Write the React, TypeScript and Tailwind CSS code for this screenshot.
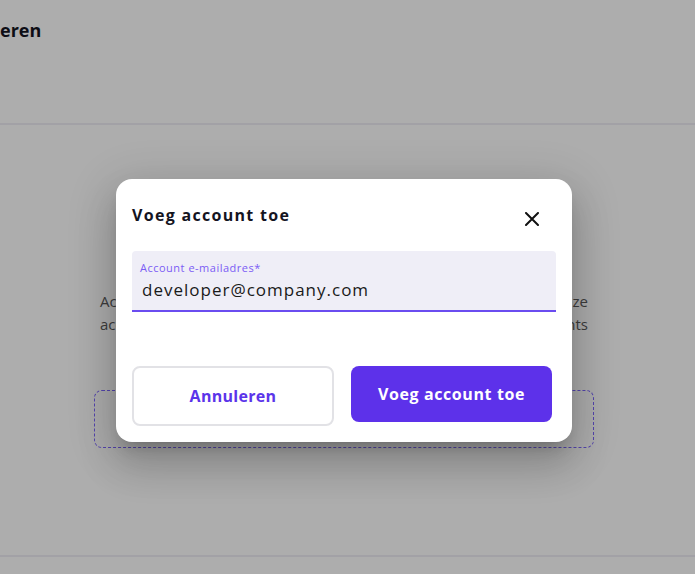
import React from 'react';

export default function App() {
  return (
    <div className="relative h-[574px] w-[695px] overflow-hidden bg-white font-['Open_Sans',sans-serif] text-[#14141f]">
      {/* Page behind the dialog */}
      <header className="h-[125px] border-b-2 border-[#efeef5] pt-[17px]">
        <h1 className="text-[18px] leading-[26px] font-bold">eren</h1>
      </header>

      <main className="h-[432px] border-b-2 border-[#efeef5]">
        <div className="ml-[94px] w-[500px] pt-[165px]">
          <p className="mx-auto w-[488px] text-justify text-[15px] leading-[23px] text-[#5a5a5a] [text-align-last:justify]">
            <span className="block">Accounts die je hier toevoegt krijgen toegang tot gegevens van deze</span>
            <span className="block">account, inclusief facturen, instellingen en gekoppelde accounts</span>
          </p>
          <div className="mt-[54px] h-[58px] rounded-lg border border-dashed border-[#7d66ff]" />
        </div>
      </main>

      {/* Backdrop */}
      <div className="absolute inset-0 bg-black/[0.32]" />

      {/* Dialog */}
      <div className="absolute left-[116px] top-[179px] w-[456px] rounded-2xl bg-white px-4 pb-4 pt-[24px] shadow-[0_11px_15px_-7px_rgba(0,0,0,0.2),0_24px_38px_3px_rgba(0,0,0,0.14),0_9px_46px_8px_rgba(0,0,0,0.12)]">
        <div className="flex items-center justify-between">
          <h2 className="text-[16px] leading-[24px] font-bold tracking-[1.3px]">Voeg account toe</h2>
          <button className="mr-[17px] mt-[7px] flex h-[14px] w-[14px] items-center justify-center">
            <svg width="14" height="14" viewBox="0 0 14 14" fill="none" stroke="#111" strokeWidth="2" strokeLinecap="round">
              <path d="M1 1l12 12M13 1L1 13" />
            </svg>
          </button>
        </div>

        <div className="mt-[24px] h-[61px] rounded-t border-b-2 border-[#6a4cf0] bg-[#efeef7] px-[8px] pt-[10px]">
          <div className="text-[11px] leading-[14px] tracking-[0.5px] text-[#7b5cf5]">Account e-mailadres*</div>
          <div className="ml-[2px] mt-[2px] text-[17px] leading-[25px] tracking-[1px] text-[#1a1a1a]">
            developer@company.com
          </div>
        </div>

        <div className="mt-[54px] flex items-start gap-[17px]">
          <button className="h-[60px] w-[202px] rounded-lg border-2 border-[#e2e2e6] bg-white text-[16px] font-bold tracking-[0.3px] text-[#5b34ea]">
            Annuleren
          </button>
          <button className="h-[56px] w-[201px] rounded-lg bg-[#5d31ea] text-[16px] font-bold tracking-[0.6px] text-white">
            Voeg account toe
          </button>
        </div>
      </div>
    </div>
  );
}
